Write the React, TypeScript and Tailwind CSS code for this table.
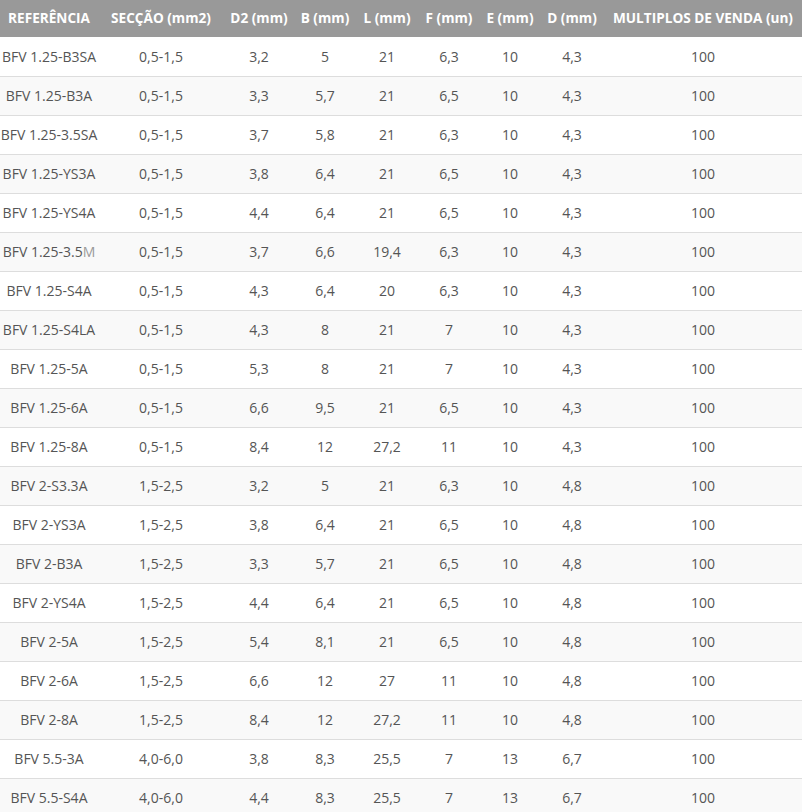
import React from "react";

const rows: string[][] = [
  ["BFV 1.25-B3SA", "0,5-1,5", "3,2", "5", "21", "6,3", "10", "4,3", "100"],
  ["BFV 1.25-B3A", "0,5-1,5", "3,3", "5,7", "21", "6,5", "10", "4,3", "100"],
  ["BFV 1.25-3.5SA", "0,5-1,5", "3,7", "5,8", "21", "6,3", "10", "4,3", "100"],
  ["BFV 1.25-YS3A", "0,5-1,5", "3,8", "6,4", "21", "6,5", "10", "4,3", "100"],
  ["BFV 1.25-YS4A", "0,5-1,5", "4,4", "6,4", "21", "6,5", "10", "4,3", "100"],
  ["BFV 1.25-3.5M", "0,5-1,5", "3,7", "6,6", "19,4", "6,3", "10", "4,3", "100"],
  ["BFV 1.25-S4A", "0,5-1,5", "4,3", "6,4", "20", "6,3", "10", "4,3", "100"],
  ["BFV 1.25-S4LA", "0,5-1,5", "4,3", "8", "21", "7", "10", "4,3", "100"],
  ["BFV 1.25-5A", "0,5-1,5", "5,3", "8", "21", "7", "10", "4,3", "100"],
  ["BFV 1.25-6A", "0,5-1,5", "6,6", "9,5", "21", "6,5", "10", "4,3", "100"],
  ["BFV 1.25-8A", "0,5-1,5", "8,4", "12", "27,2", "11", "10", "4,3", "100"],
  ["BFV 2-S3.3A", "1,5-2,5", "3,2", "5", "21", "6,3", "10", "4,8", "100"],
  ["BFV 2-YS3A", "1,5-2,5", "3,8", "6,4", "21", "6,5", "10", "4,8", "100"],
  ["BFV 2-B3A", "1,5-2,5", "3,3", "5,7", "21", "6,5", "10", "4,8", "100"],
  ["BFV 2-YS4A", "1,5-2,5", "4,4", "6,4", "21", "6,5", "10", "4,8", "100"],
  ["BFV 2-5A", "1,5-2,5", "5,4", "8,1", "21", "6,5", "10", "4,8", "100"],
  ["BFV 2-6A", "1,5-2,5", "6,6", "12", "27", "11", "10", "4,8", "100"],
  ["BFV 2-8A", "1,5-2,5", "8,4", "12", "27,2", "11", "10", "4,8", "100"],
  ["BFV 5.5-3A", "4,0-6,0", "3,8", "8,3", "25,5", "7", "13", "6,7", "100"],
  ["BFV 5.5-S4A", "4,0-6,0", "4,4", "8,3", "25,5", "7", "13", "6,7", "100"],
];

const headers = [
  "REFERÊNCIA",
  "SECÇÃO (mm2)",
  "D2 (mm)",
  "B (mm)",
  "L (mm)",
  "F (mm)",
  "E (mm)",
  "D (mm)",
  "MULTIPLOS DE VENDA (un)",
];

const widths = ["w-[98px]", "w-[126px]", "w-[70px]", "w-[62px]", "w-[62px]", "w-[62px]", "w-[60px]", "w-[64px]", "w-[198px]"];

export default function App() {
  return (
    <div className="w-[802px] h-[812px] overflow-hidden bg-white" style={{ fontFamily: '"Open Sans", sans-serif' }}>
      <table className="w-[802px] table-fixed border-collapse">
        <colgroup>
          {widths.map((w, i) => (
            <col key={i} className={w} />
          ))}
        </colgroup>
        <thead>
          <tr className="h-[37px] bg-[#999999]">
            {headers.map((h, i) => (
              <th key={i} className="p-0 pb-[1px] text-center text-[13.6px] font-bold text-white whitespace-nowrap align-middle">
                {h}
              </th>
            ))}
          </tr>
        </thead>
        <tbody>
          {rows.map((r, ri) => (
            <tr key={ri} className={`h-[39px] border-b border-[#dddddd] ${ri % 2 === 0 ? "bg-white" : "bg-[#f9f9f9]"}`}>
              {r.map((c, ci) => (
                <td key={ci} className="p-0 text-center text-[14px] text-[#555555] whitespace-nowrap align-middle">
                  {ci === 0 && c === "BFV 1.25-3.5M" ? (
                    <>
                      BFV 1.25-3.5<span className="text-[#999999]">M</span>
                    </>
                  ) : (
                    c
                  )}
                </td>
              ))}
            </tr>
          ))}
        </tbody>
      </table>
    </div>
  );
}
